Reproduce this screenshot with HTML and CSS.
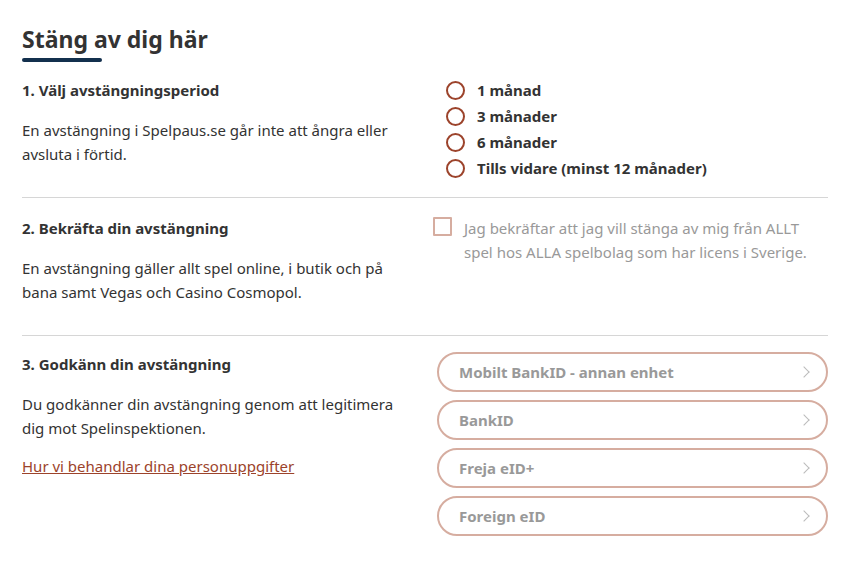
FILE: index.html
```html
<!DOCTYPE html>
<html lang="sv">
<head>
  <meta charset="UTF-8" />
  <meta name="viewport" content="width=device-width, initial-scale=1.0"/>
  <title>Stäng av dig här</title>
  <link rel="stylesheet" href="styles.css">
</head>
<body>

  <main class="page">
    <h1 class="page-title">Stäng av dig här</h1>

    <!-- Steg 1 -->
    <section class="step step-period">
      <div class="step-info">
        <h2>1. Välj avstängningsperiod</h2>
        <p>En avstängning i Spelpaus.se går inte att ångra eller avsluta i förtid.</p>
      </div>
      <div class="step-action">
        <div class="periods">
          <label class="radio"><input type="radio" name="period" /><span>1 månad</span></label>
          <label class="radio"><input type="radio" name="period" /><span>3 månader</span></label>
          <label class="radio"><input type="radio" name="period" /><span>6 månader</span></label>
          <label class="radio"><input type="radio" name="period" /><span>Tills vidare (minst 12 månader)</span></label>
        </div>
      </div>
    </section>

    <!-- Steg 2 -->
    <section class="step step-confirm">
      <div class="step-info">
        <h2>2. Bekräfta din avstängning</h2>
        <p>En avstängning gäller allt spel online, i butik och på bana samt Vegas och Casino Cosmopol.</p>
      </div>
      <div class="step-action">
        <label class="confirm">
          <input type="checkbox" disabled />
          <span>Jag bekräftar att jag vill stänga av mig från ALLT spel hos ALLA spelbolag som har licens i Sverige.</span>
        </label>
      </div>
    </section>

    <!-- Steg 3 -->
    <section class="step step-approve">
      <div class="step-info">
        <h2>3. Godkänn din avstängning</h2>
        <p>Du godkänner din avstängning genom att legitimera dig mot Spelinspektionen.</p>
        <a href="#" class="privacy-link">Hur vi behandlar dina personuppgifter</a>
      </div>
      <div class="step-action">
        <div class="id-list">
          <button class="id-btn" disabled>Mobilt BankID - annan enhet <span class="chevron"></span></button>
          <button class="id-btn" disabled>BankID <span class="chevron"></span></button>
          <button class="id-btn" disabled>Freja eID+ <span class="chevron"></span></button>
          <button class="id-btn" disabled>Foreign eID <span class="chevron"></span></button>
        </div>
      </div>
    </section>
  </main>

</body>
</html>
```

FILE: styles.css
```css
:root {
  --text: #333;
  --muted: #999;
  --brand: #9c432b;
  --brand-light: #d6ada0;
  --navy: #13304d;
  --line: #d6d6d6;
}

* {
  box-sizing: border-box;
}

body {
  margin: 0;
  background: #fff;
  color: var(--text);
  font-family: 'Noto Sans', 'Open Sans', sans-serif;
  font-size: 15px;
  line-height: 24px;
}

.page {
  padding: 22px 21px 20px 22px;
}

.page-title {
  display: inline-block;
  margin: 0 0 16px;
  font-size: 23px;
  line-height: 34px;
  font-weight: 700;
  position: relative;
  padding-bottom: 6px;
}

.page-title::after {
  content: '';
  position: absolute;
  left: 0;
  bottom: 0;
  width: 80px;
  height: 4px;
  border-radius: 2px;
  background: var(--navy);
}

.step {
  display: grid;
  grid-template-columns: 1fr 1fr;
  column-gap: 16px;
  border-bottom: 1px solid var(--line);
}

.step-period {
  padding: 0 0 17px;
}

.step-confirm {
  padding: 18px 0 31px;
}

.step-approve {
  padding: 16px 0 26px;
  border-bottom: none;
}

.step h2 {
  margin: 0 0 16px;
  font-size: 15px;
  line-height: 24px;
  font-weight: 700;
}

.step p {
  margin: 0;
}

/* radios */
.periods {
  display: flex;
  flex-direction: column;
  gap: 2px;
  padding-left: 13px;
}

.radio {
  display: flex;
  align-items: center;
  gap: 12px;
  font-weight: 700;
  cursor: pointer;
}

.radio input {
  appearance: none;
  margin: 0;
  width: 19px;
  height: 19px;
  border: 2px solid var(--brand);
  border-radius: 50%;
}

/* checkbox */
.confirm {
  display: flex;
  align-items: flex-start;
  gap: 12px;
  color: var(--muted);
}

.confirm input {
  appearance: none;
  flex: none;
  margin: 1px 0 0;
  width: 19px;
  height: 19px;
  border: 2px solid var(--brand-light);
  border-radius: 1px;
}

.privacy-link {
  display: inline-block;
  margin-top: 14px;
  color: var(--brand);
}

/* id buttons */
.id-list {
  display: flex;
  flex-direction: column;
  gap: 8px;
  padding-left: 4px;
}

.id-btn {
  display: flex;
  align-items: center;
  justify-content: space-between;
  height: 40px;
  padding: 0 18px 0 20px;
  background: #fff;
  border: 2px solid var(--brand-light);
  border-radius: 20px;
  color: var(--muted);
  font-family: inherit;
  font-size: 15px;
  font-weight: 700;
  text-align: left;
}

.chevron {
  width: 8px;
  height: 8px;
  border-top: 1px solid #bbb;
  border-right: 1px solid #bbb;
  transform: rotate(45deg);
}
```
